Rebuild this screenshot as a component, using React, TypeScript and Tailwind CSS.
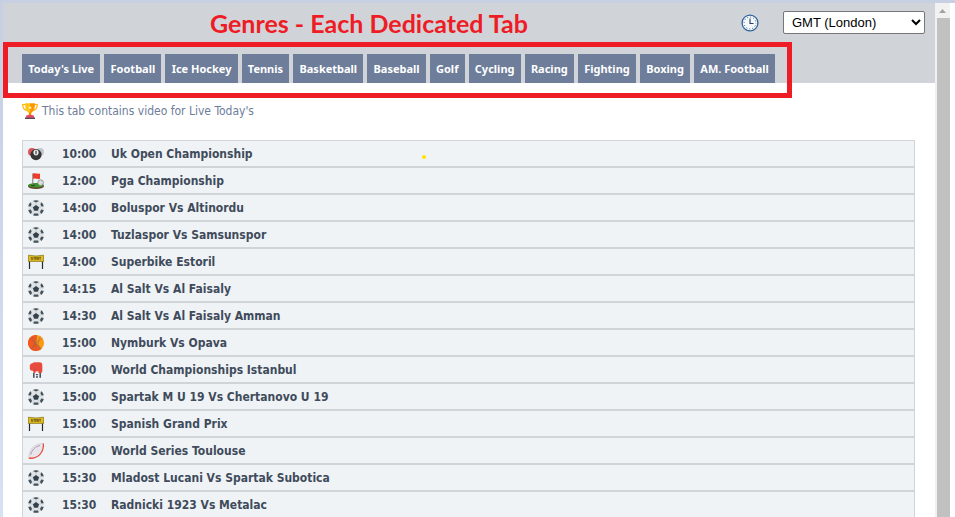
import type { ReactNode } from 'react';

type IconName =
  | 'pool'
  | 'golf'
  | 'football'
  | 'racing'
  | 'basketball'
  | 'boxing'
  | 'rugby';

type Match = {
  icon: IconName;
  time: string;
  title: string;
};

const tabs = [
  "Today's Live",
  'Football',
  'Ice Hockey',
  'Tennis',
  'Basketball',
  'Baseball',
  'Golf',
  'Cycling',
  'Racing',
  'Fighting',
  'Boxing',
  'AM. Football',
];

const matches: Match[] = [
  { icon: 'pool', time: '10:00', title: 'Uk Open Championship' },
  { icon: 'golf', time: '12:00', title: 'Pga Championship' },
  { icon: 'football', time: '14:00', title: 'Boluspor Vs Altinordu' },
  { icon: 'football', time: '14:00', title: 'Tuzlaspor Vs Samsunspor' },
  { icon: 'racing', time: '14:00', title: 'Superbike Estoril' },
  { icon: 'football', time: '14:15', title: 'Al Salt Vs Al Faisaly' },
  { icon: 'football', time: '14:30', title: 'Al Salt Vs Al Faisaly Amman' },
  { icon: 'basketball', time: '15:00', title: 'Nymburk Vs Opava' },
  { icon: 'boxing', time: '15:00', title: 'World Championships Istanbul' },
  { icon: 'football', time: '15:00', title: 'Spartak M U 19 Vs Chertanovo U 19' },
  { icon: 'racing', time: '15:00', title: 'Spanish Grand Prix' },
  { icon: 'rugby', time: '15:00', title: 'World Series Toulouse' },
  { icon: 'football', time: '15:30', title: 'Mladost Lucani Vs Spartak Subotica' },
  { icon: 'football', time: '15:30', title: 'Radnicki 1923 Vs Metalac' },
];

//* Sport icons, all drawn on a 16 x 16 grid
const sportIcons: Record<IconName, ReactNode> = {
  pool: (
    <>
      <circle cx="4" cy="6" r="4" fill="#dc5459" />
      <circle cx="12" cy="6" r="4" fill="#c3c7cb" />
      <circle cx="8" cy="8.6" r="5.6" fill="#363435" />
      <ellipse cx="8" cy="6.6" rx="2.6" ry="2.8" fill="#eceff1" />
      <path d="M8 4.8v3.4" stroke="#363435" strokeWidth="1.2" />
    </>
  ),
  golf: (
    <>
      <ellipse cx="8" cy="13.2" rx="8" ry="2.8" fill="#65432c" />
      <ellipse cx="8" cy="12.2" rx="8" ry="2.2" fill="#3d9427" />
      <ellipse cx="5" cy="12.4" rx="2" ry="0.8" fill="#1e4b18" />
      <path d="M4.8 0.5v11.8" stroke="#75787a" strokeWidth="1" />
      <path d="M5 0.6c2.6-.9 4 .9 7 0v5.2c-3 .9-4.4-.9-7 0z" fill="#ee3b2b" />
      <circle cx="12.6" cy="9.6" r="2.8" fill="#e8e8e8" stroke="#7e8284" strokeWidth="0.8" />
      <path d="M11.4 9h.8M12.8 10.4h.8M12.8 8.4h.8" stroke="#9a9fa2" strokeWidth="0.8" />
    </>
  ),
  football: (
    <>
      <circle cx="8" cy="8" r="7.9" fill="#dfe3e6" />
      <path d="M8 4.9l3.1 2.3-1.2 3.6H6.1L4.9 7.2z" fill="#32414c" />
      <path
        d="M5 .9C6.8 0 9.2 0 11 .9L8 2.6zM13.4 2.2c1.1 1 2 2.4 2.3 4l-2.3.3-1-2.3zM2.6 2.2C1.5 3.2.6 4.6.3 6.2l2.3.3 1-2.3zM15.7 10c-.4 1.6-1.3 3-2.5 4l-1.2-2.1 1.2-2.3zM.3 10c.4 1.6 1.3 3 2.5 4L4 11.9 2.8 9.6zM5.3 15.4l.6-1.9h4.2l.6 1.9c-1.7.6-3.7.6-5.4 0z"
        fill="#43515b"
      />
      <path
        d="M8 2.7V5M11 7.2l2.3-.6M9.9 10.7l1.4 1.7M6.1 10.7l-1.4 1.7M5 7.2l-2.3-.6"
        stroke="#b4bcc1"
        strokeWidth="0.6"
      />
    </>
  ),
  racing: (
    <>
      <path d="M1.5 7v8M14.5 7v8" stroke="#242936" strokeWidth="1.2" />
      <path d="M.4 1.2L8 2l7.6-.8v6.2H.4z" fill="#e3bd20" stroke="#80701d" strokeWidth="0.7" />
      <path
        d="M4.6 3.4H3.2v1h1.4v1.2H3.2M5.4 3.4h1.8M6.3 3.4v2.4M7.6 5.8V3.4h1.2v2.4M9.6 5.8V3.4h1v2.4M11.2 3.4H13M12.1 3.4v2.4"
        fill="none"
        stroke="#5a4c18"
        strokeWidth="0.7"
      />
    </>
  ),
  basketball: (
    <>
      <circle cx="8" cy="8" r="8" fill="#ff9811" />
      <path d="M8.6 0A8 8 0 1 0 13 14.2L8 8z" fill="#f65722" />
      <path
        d="M8.3 0L7.8 16M1.8 3.2l11.8 10.5M14.3 3L2.2 13.5M3.8 1.5c3.2 3.3 3.4 9 .2 13M12.6 1.4c-3 3.5-3.4 9-.2 13"
        fill="none"
        stroke="#87644c"
        strokeWidth="0.5"
      />
    </>
  ),
  boxing: (
    <>
      <path
        d="M7 .2h4.5C13.500.2 14.300 1.400 14.300 3.200V9c0 1-.5 1.800-1.300 2.200H5.400V8.800H4.200C2.700 8.800 1.800 7.800 1.800 6.300V4.200c0-1.700 1-2.700 2.600-2.900C5 .6 5.900.2 7 .2z"
        fill="#e64b3e"
      />
      <path d="M5.4 8.8c1.4 0 2.2-.8 2.4-2" fill="none" stroke="#c03a2b" strokeWidth="0.7" />
      <path d="M5 11h8v4.6H5z" fill="#eceff1" />
      <path d="M5 11h1.6v4.7H5zM11.4 11H13v4.7h-1.6zM8 12h2v1.2H8zM8 14.2h2v1.5H8z" fill="#48535f" />
      <path d="M7.6 9.4h2.800v2H7.600z" fill="#f3f5f6" />
    </>
  ),
  rugby: (
    <>
      <path d="M15.4.5C7.4.3.7 5.4.8 15.2 10.6 16 16 9 15.4.5z" fill="#e7e5e9" stroke="#c7c3cb" strokeWidth="0.6" />
      <path d="M15.4.5C16 9 10.6 16 .8 15.2" fill="none" stroke="#eb4b3f" strokeWidth="1.3" />
      <path d="M2.8 11.5C4 7 7 3.5 12 2.5" fill="none" stroke="#a78fb5" strokeWidth="0.9" />
    </>
  ),
};

function SportIcon({ name }: { name: IconName }) {
  return (
    <svg viewBox="0 0 16 16" className="size-4 block" aria-hidden="true">
      {sportIcons[name]}
    </svg>
  );
}

function ClockIcon() {
  return (
    <svg viewBox="0 0 18 18" className="size-[18px]" aria-hidden="true">
      <circle cx="9" cy="9" r="7.9" fill="#f3f8fc" stroke="#30639a" strokeWidth="1.3" />
      <circle
        cx="9"
        cy="9"
        r="5.9"
        fill="none"
        stroke="#33475e"
        strokeWidth="1"
        strokeDasharray="0.9 2.189"
        strokeDashoffset="0.45"
      />
      <path d="M9 4.5v5h3.5" fill="none" stroke="#2b3d54" strokeWidth="1.1" />
    </svg>
  );
}

function TrophyIcon() {
  return (
    <svg viewBox="0 0 16 16" className="size-4" aria-hidden="true">
      <path
        d="M4 1.5H.7c0 3.5 1.3 5.5 4.6 6M12 1.5h3.3c0 3.5-1.3 5.5-4.6 6"
        fill="none"
        stroke="#ffb400"
        strokeWidth="1.2"
      />
      <path d="M3 .3h5v10.2C4.8 9.5 3 6 3 .3z" fill="#ffc516" />
      <path d="M8 .3h5c0 5.7-1.8 9.2-5 10.2z" fill="#ff9600" />
      <path d="M7 9.5h2l.6 3.5H6.4z" fill="#f08a00" />
      <path d="M8 2.7l.6 1.3 1.4.1-1.1.9.4 1.4L8 5.6l-1.3.8.4-1.4L6 4.1l1.4-.1z" fill="#fff0a5" />
      <path d="M4.5 12.3h7l.7 2.4H3.8z" fill="#e8385c" />
      <path d="M3 14.5h10V16H3z" fill="#5d4550" />
    </svg>
  );
}

function Scrollbar() {
  return (
    <div className="w-[15px] shrink-0 bg-[#f1f1f1] flex flex-col" aria-hidden="true">
      <div className="h-[15px] flex items-center justify-center">
        <svg viewBox="0 0 7 4" className="w-[7px] h-1">
          <path d="M0 4L3.5 0 7 4z" fill="#a3a3a3" />
        </svg>
      </div>
      <div className="grow ml-0.5 bg-[#c1c1c1]" />
    </div>
  );
}

export default function App() {
  return (
    <div className="h-screen overflow-hidden flex flex-col bg-white font-['DejaVu_Sans_Condensed','Noto_Sans',sans-serif]">
      <div className="h-[3px] shrink-0 bg-[#c7cfe2]" />
      <div className="grow flex min-h-0">
        <div className="w-[3px] shrink-0 bg-linear-to-b from-[#c7cfe2] to-[#d6e2f2]" />
        <main className="grow min-w-0">
          <header className="bg-[#d0d3d8]">
            <div className="h-[39px] flex items-center pl-[207px] pr-2.5">
              <h1 className="font-['Lato',sans-serif] text-[25px] leading-[30px] font-bold text-[#ee1c25] whitespace-nowrap">
                Genres - Each Dedicated Tab
              </h1>
              <div className="ml-auto flex items-center gap-6">
                <ClockIcon />
                <select
                  aria-label="Time zone"
                  className="w-[142px] h-[23px] pl-1 bg-white border border-[#767676] rounded-xs font-['Liberation_Sans',sans-serif] text-[13px] text-black"
                >
                  <option>GMT (London)</option>
                </select>
              </div>
            </div>
            {/* The red frame hangs over the bottom edge of the header */}
            <nav className="relative h-[41px] pt-3 pl-[19px] font-['Noto_Sans',sans-serif]">
              <div className="max-w-[753px] flex gap-1">
                {tabs.map((tab) => (
                  <button
                    key={tab}
                    type="button"
                    className="grow h-[29px] px-1.5 bg-[#6d7d9a] text-white text-[11px] leading-4 font-bold whitespace-nowrap"
                  >
                    {tab}
                  </button>
                ))}
              </div>
              <div className="absolute left-0 top-0 w-[789px] h-14 border-5 border-[#ee1c25] pointer-events-none" />
            </nav>
          </header>

          <section className="pl-[19px] pr-5">
            <p className="pt-5 flex items-center gap-1 text-[12px] leading-4 text-[#6d7d9a]">
              <TrophyIcon />
              This tab contains video for Live Today's
            </p>
            <div className="relative mt-[21px]">
              <table className="w-full border-separate border-spacing-0 text-[12px] leading-4 font-bold text-[#3f4b5b]">
                <tbody>
                  {matches.map((match, index) => (
                    <tr key={index} className="h-[27px] bg-[#eff3f6]">
                      <td className="w-10 p-0 pl-[5px] border-y border-l border-[#d0d3d8]">
                        <SportIcon name={match.icon} />
                      </td>
                      <td className="w-[49px] p-0 border-y border-[#d0d3d8]">{match.time}</td>
                      <td className="p-0 border-y border-r border-[#d0d3d8]">{match.title}</td>
                    </tr>
                  ))}
                </tbody>
              </table>
              <span className="absolute left-[400px] top-[15px] size-1 rounded-full bg-[#ffe600]" />
            </div>
          </section>
        </main>
        <Scrollbar />
        <div className="w-[5px] shrink-0" />
      </div>
    </div>
  );
}
